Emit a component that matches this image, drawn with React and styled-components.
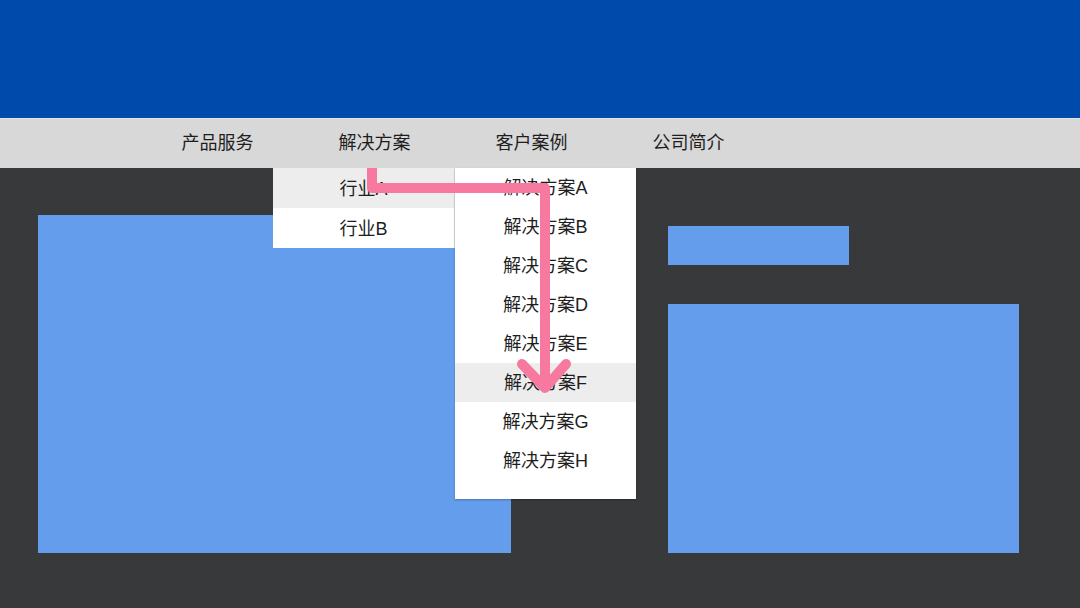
import React from "react";
import styled, { createGlobalStyle } from "styled-components";

const GlobalStyle = createGlobalStyle`
  html, body {
    margin: 0;
    padding: 0;
    background: #38393b;
    font-family: "Liberation Sans", "Noto Sans CJK SC", sans-serif;
  }
`;

const Page = styled.div`
  position: relative;
  width: 1080px;
  height: 608px;
  overflow: hidden;
  background: #38393b;
`;

const Header = styled.header`
  height: 118px;
  background: #004aac;
`;

const NavBar = styled.nav`
  position: relative;
  z-index: 2;
  height: 50px;
  box-sizing: border-box;
  border-top: 1px solid #e4e4e4;
  background: #d8d8d8;
  display: flex;
  padding-left: 139px;
`;

const NavItem = styled.div`
  position: relative;
  width: 157px;
  display: flex;
  align-items: center;
  justify-content: center;
  padding-bottom: 5px;
  box-sizing: border-box;
  font-size: 18px;
  color: #1e1e1e;
`;

const Menu = styled.ul`
  position: absolute;
  top: 49px;
  left: ${(p) => p.$left}px;
  width: ${(p) => p.$width}px;
  margin: 0;
  padding: 0 0 ${(p) => p.$padBottom || 0}px;
  list-style: none;
  background: #fff;
  border-right: ${(p) => (p.$divider ? "1px solid #dcdcdc" : "none")};
  box-sizing: border-box;
`;

const SubMenu = styled(Menu)`
  top: 0;
  left: calc(100% + 1px);
  border-right: none;
  box-shadow: 0 1px 2px rgba(0, 0, 0, 0.25);
`;

const MenuItem = styled.li`
  position: relative;
  height: ${(p) => p.$h}px;
  display: flex;
  align-items: center;
  justify-content: center;
  padding-bottom: 3px;
  box-sizing: border-box;
  font-size: 18px;
  color: #1e1e1e;
  background: ${(p) => (p.$active ? "#ededed" : "transparent")};
`;

const Body = styled.main`
  display: flex;
  padding: 47px 0 0 38px;
  gap: 157px;
`;

const Block = styled.div`
  width: ${(p) => p.$w}px;
  height: ${(p) => p.$h}px;
  background: #639deb;
`;

const Side = styled.div`
  display: flex;
  flex-direction: column;
  gap: 39px;
  margin-top: 11px;
`;

const Arrow = styled.svg`
  position: absolute;
  left: 0;
  top: 0;
  z-index: 3;
  pointer-events: none;
`;

const navLinks = ["产品服务", "解决方案", "客户案例", "公司简介"];
const industries = ["行业A", "行业B"];
const solutions = ["A", "B", "C", "D", "E", "F", "G", "H"].map((c) => "解决方案" + c);

export default function App() {
  return (
    <Page>
      <GlobalStyle />
      <Header />
      <NavBar>
        {navLinks.map((label, i) => (
          <NavItem key={label}>
            {label}
            {i === 1 && (
              <Menu $left={-23} $width={182} $divider>
                {industries.map((name, j) => (
                  <MenuItem key={name} $h={40} $active={j === 0}>
                    {name}
                    {j === 0 && (
                      <SubMenu $width={181} $padBottom={19}>
                        {solutions.map((s, k) => (
                          <MenuItem key={s} $h={39} $active={k === 5}>
                            {s}
                          </MenuItem>
                        ))}
                      </SubMenu>
                    )}
                  </MenuItem>
                ))}
              </Menu>
            )}
          </NavItem>
        ))}
      </NavBar>
      <Body>
        <Block $w={473} $h={338} />
        <Side>
          <Block $w={181} $h={39} />
          <Block $w={351} $h={249} />
        </Side>
      </Body>
      <Arrow width="1080" height="608" viewBox="0 0 1080 608">
        <g
          fill="none"
          stroke="#f8799f"
          strokeWidth="10"
          strokeLinecap="round"
          strokeLinejoin="round"
        >
          <path d="M372 168 V188 H545 V386" strokeLinecap="butt" />
          <path d="M522 364 L545 388 L566 364" />
        </g>
      </Arrow>
    </Page>
  );
}
